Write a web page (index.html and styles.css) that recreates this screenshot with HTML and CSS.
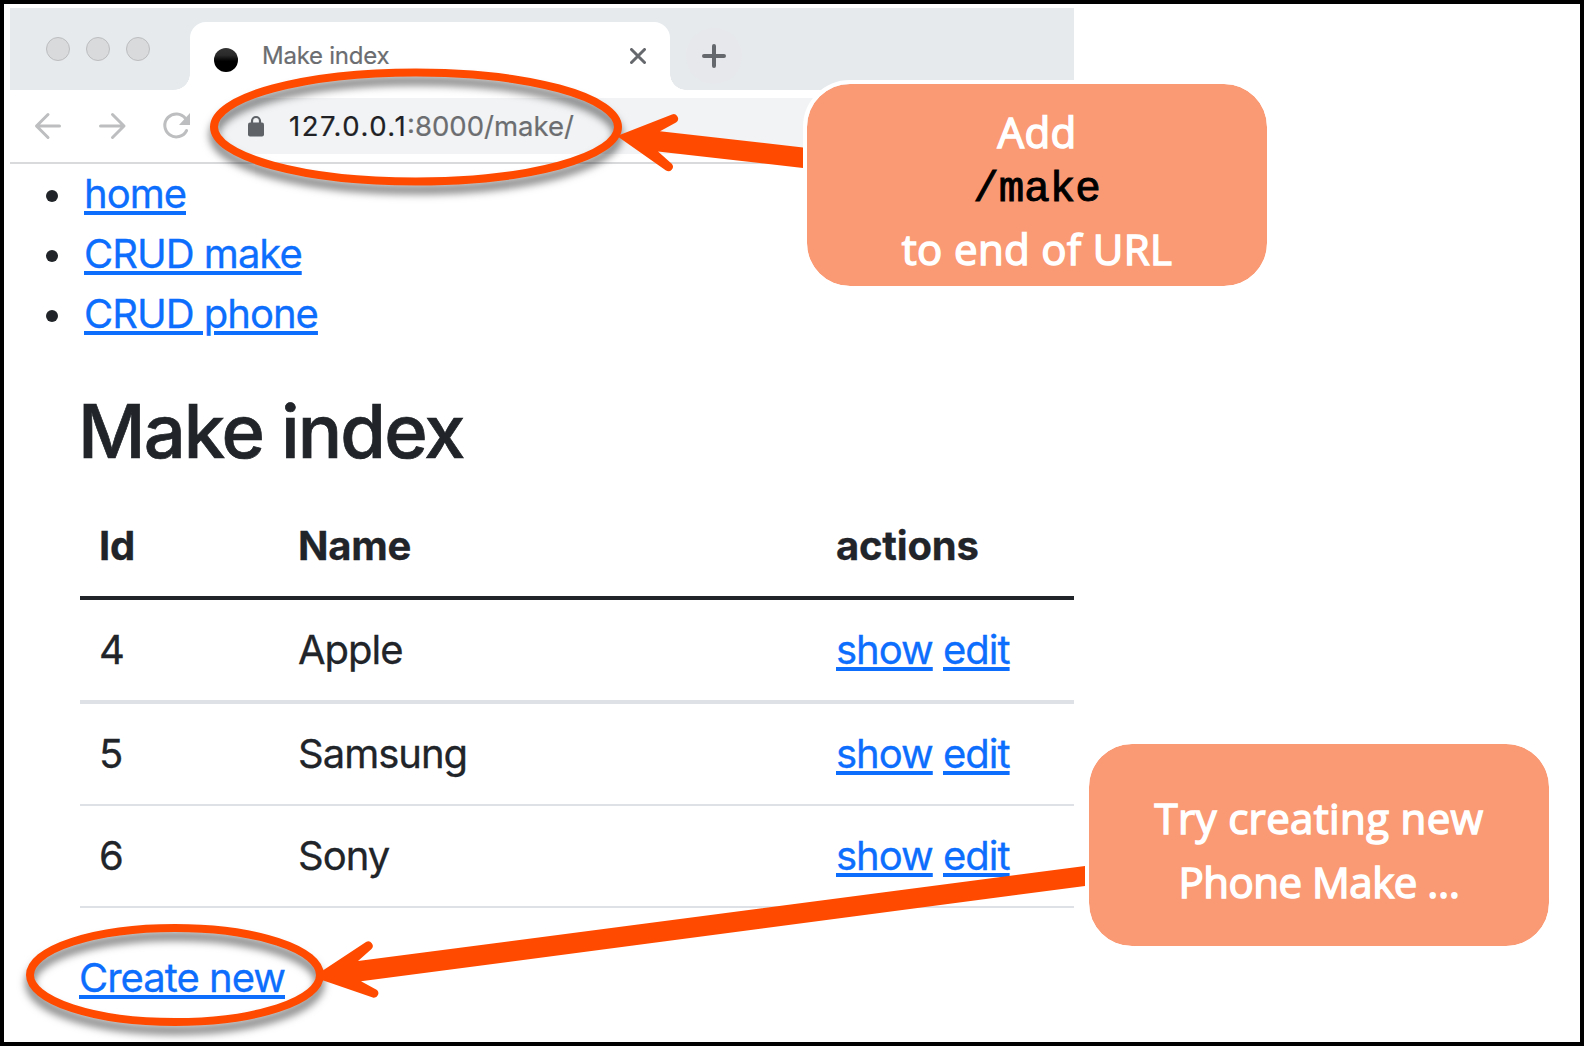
FILE: index.html
```
<!DOCTYPE html>
<html lang="en">
<head>
<meta charset="utf-8">
<title>Make index</title>
<link rel="stylesheet" href="styles.css">
</head>
<body>
<main class="frame">
  <section class="browser">
    <header class="tabs">
      <div class="lights"><i></i><i></i><i></i></div>
      <div class="tab">
        <span class="favicon"></span>
        <span class="tab-title">Make index</span>
        <svg class="close" width="16" height="16" viewBox="0 0 16 16"><path d="M1.500 1.500l13 13M14.500 1.500l-13 13"/></svg>
      </div>
      <svg class="plus" width="56" height="56" viewBox="0 0 56 56"><circle cx="28" cy="28" r="28"/><path d="M28 18v20M18 28h20"/></svg>
    </header>
    <div class="toolbar">
      <svg class="nav" width="180" height="32" viewBox="0 0 180 32">
        <path d="M39.500 16H17M28 4.500L16.500 16 28 27.500M80.500 16H103M92.500 4.500L104 16 92.500 27.500"/>
        <path d="M165.500 8.500A11.500 11.500 0 1 0 166.600 20.500"/>
        <path class="tip" d="M170 3v12h-11z"/>
      </svg>
      <div class="address">
        <svg class="lock" width="16" height="22" viewBox="0 0 16 22"><path d="M4 9V6a4 4 0 0 1 8 0v3"/><rect y="7.500" width="16" height="14" rx="2"/></svg>
        <span class="url"><b>127.0.0.1</b>:8000/make/</span>
      </div>
    </div>
    <div class="page">
      <ul class="menu">
        <li><a>home</a></li>
        <li><a>CRUD make</a></li>
        <li><a>CRUD phone</a></li>
      </ul>
      <h1>Make index</h1>
      <div class="table">
        <div class="row head"><span>Id</span><span>Name</span><span>actions</span></div>
        <div class="row thick"><span>4</span><span>Apple</span><span><a>show</a> <a>edit</a></span></div>
        <div class="row"><span>5</span><span>Samsung</span><span><a>show</a> <a>edit</a></span></div>
        <div class="row"><span>6</span><span>Sony</span><span><a>show</a> <a>edit</a></span></div>
      </div>
      <a class="create">Create new</a>
    </div>
  </section>
  <svg class="marks" width="1584" height="1046" viewBox="0 0 1584 1046">
    <g class="rings"><ellipse cx="416" cy="127" rx="202" ry="54.500"/><ellipse cx="175" cy="975" rx="145" ry="47"/></g>
    <path d="M617 136L672 114.500A4.500 4.500 0 0 1 676 122.500L660 131.300L803 147.500V168L658 151.500L672 164A4.500 4.500 0 0 1 666 170.500Z"/>
    <path d="M319 973L366 942A4.500 4.500 0 0 1 371.500 949L358 961L1085 866V886L361 981.300L377 990A4.500 4.500 0 0 1 373.500 997.700L319 979Z"/>
  </svg>
  <aside class="callout add"><span>Add</span><code>/make</code><span>to end of URL</span></aside>
  <aside class="callout try"><span>Try creating new</span><span class="second">Phone Make …</span></aside>
</main>
</body>
</html>
```
FILE: styles.css
```
* { box-sizing: border-box; }
body { margin: 0; background: #fff; font-family: Inter, "Liberation Sans", sans-serif; color: #212529; }
.frame { position: relative; width: 1584px; height: 1046px; border: 4px solid #000; padding: 4px 0 0 6px; overflow: hidden; background: #fff; }
.browser { width: 1064px; }
.tabs { display: flex; height: 82px; background: #e6eaed; }
.lights { display: flex; gap: 16px; width: 180px; padding: 29px 0 0 36px; }
.lights i { width: 24px; height: 24px; border-radius: 50%; background: #d9dadc; border: 1px solid #bcbdbf; }
.tab { position: relative; display: flex; align-items: center; width: 480px; height: 68px; margin-top: 14px; padding: 0 24px; background: #fff; border-radius: 16px 16px 0 0; }
.tab::before, .tab::after { content: ""; position: absolute; bottom: 0; width: 16px; height: 16px; }
.tab::before { left: -16px; background: radial-gradient(circle at 0 0, #e6eaed 15.500px, #fff 16px); }
.tab::after { right: -16px; background: radial-gradient(circle at 100% 0, #e6eaed 15.500px, #fff 16px); }
.favicon { width: 24px; height: 24px; margin-top: 8px; border-radius: 50%; background: linear-gradient(#333 0, #2a2a2a 30%, #000 55%); }
.tab-title { margin: -2px 0 0 24px; font-size: 24px; color: #6b6d70; letter-spacing: -.25px; -webkit-text-stroke: .2px; }
.close { margin-left: auto; fill: none; stroke: #65686c; stroke-width: 3; stroke-linecap: round; }
.plus { margin: 20px 0 0 16px; }
.plus circle { fill: #e7e8ec; }
.plus path { stroke: #65686c; stroke-width: 4; stroke-linecap: round; }
.toolbar { display: flex; height: 74px; padding-top: 8px; border-bottom: 2px solid #d9dadc; }
.nav { margin: 11.500px 20px 0 10px; fill: none; stroke: #bdbebf; stroke-width: 3; stroke-linecap: round; stroke-linejoin: round; }
.nav .tip { fill: #bdbebf; stroke: none; }
.address { display: flex; flex: 1; align-items: center; height: 56px; padding-left: 28px; background: #f1f3f4; border-radius: 28px 0 0 28px; }
.lock { fill: #5f6368; }
.lock path { fill: none; stroke: #5f6368; stroke-width: 2.200; }
.url { margin-left: 25px; font-size: 27.500px; color: #6b6d70; white-space: nowrap; -webkit-text-stroke: .2px; }
.url b { font-weight: 400; color: #202124; letter-spacing: 1.500px; }
.page { padding-left: 70px; font-size: 40px; line-height: 60px; letter-spacing: -1px; -webkit-text-stroke: .3px; }
.menu { list-style: none; margin: 0; padding: 0; }
.menu li { display: flex; align-items: center; gap: 26px; height: 60px; margin-left: -34px; }
.menu li::before { content: ""; width: 12px; height: 12px; margin-top: 4px; border-radius: 50%; background: #212529; }
a { color: #0d6efd; text-decoration: underline; text-decoration-thickness: 4px; text-underline-offset: 3px; }
h1 { margin: 41px 0 19px -2px; font-size: 74px; font-weight: 500; line-height: 92px; letter-spacing: -1.900px; -webkit-text-stroke: .7px; }
.row { display: grid; grid-template-columns: 199px 538px 1fr; padding: 20px 0 20px 19px; border-bottom: 2px solid #dee2e6; }
.row.thick { border-bottom-width: 4px; }
.row.head { border-bottom: 4px solid #212529; font-weight: 700; letter-spacing: -.200px; }
.create { display: inline-block; margin: 40px 0 0 -1px; }
.marks { position: absolute; left: -4px; top: -4px; fill: #ff4a00; }
.rings { fill: none; stroke: #ff4a00; stroke-width: 8; filter: drop-shadow(0 8px 4px rgba(0, 0, 0, .55)); }
.callout { position: absolute; display: flex; flex-direction: column; align-items: center; width: 468px; height: 210px; border: 4px solid #fff; border-radius: 47px; background: #fa9a75; background-clip: padding-box; color: #fff; font: 400 42px/64px "Open Sans", sans-serif; letter-spacing: .350px; -webkit-text-stroke: 1.500px; white-space: nowrap; }
.add { left: 799px; top: 76px; padding-top: 16px; }
.add code { margin: 2px 0 3px; font: 400 42.500px/48px "Liberation Mono", monospace; color: #000; letter-spacing: 0; -webkit-text-stroke: 1px; }
.try { left: 1081px; top: 736px; padding-top: 42px; }
.second { letter-spacing: -.5px; }
```
